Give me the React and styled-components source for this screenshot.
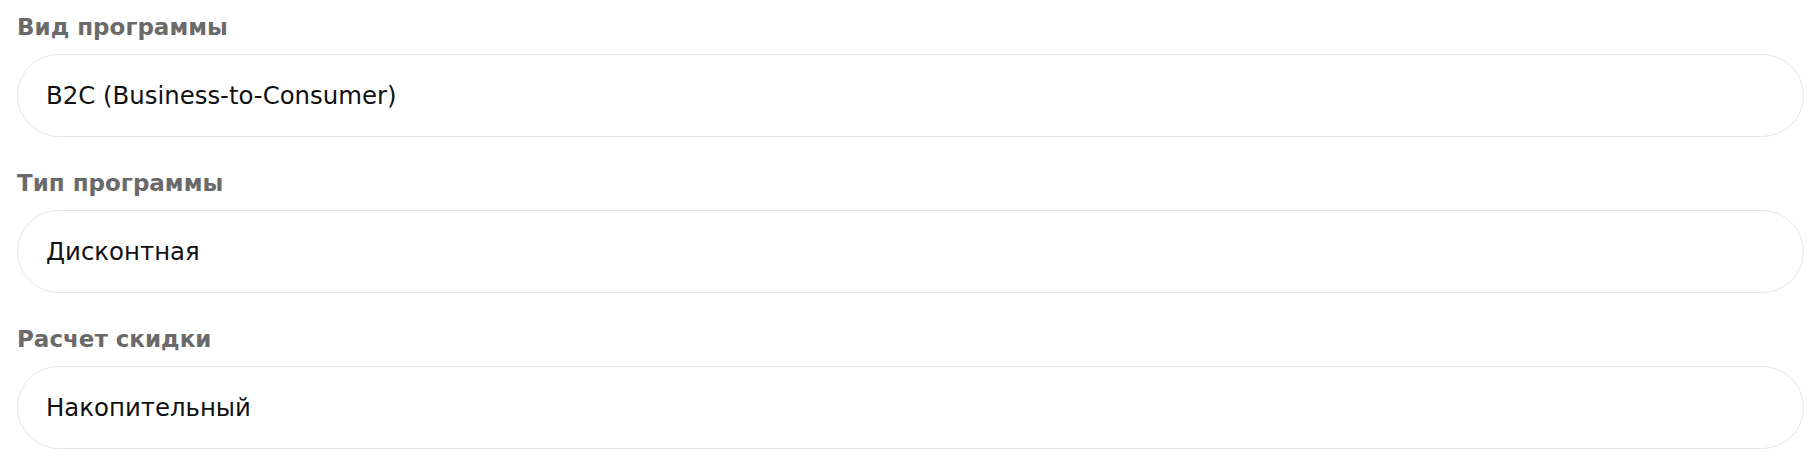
import React from 'react';
import { styled, createGlobalStyle } from 'styled-components';

const GlobalStyle = createGlobalStyle`
  html, body {
    margin: 0;
    padding: 0;
    background: #ffffff;
  }
  body {
    font-family: "DejaVu Sans", "Liberation Sans", sans-serif;
  }
`;

const fields = [
  { label: 'Вид программы', value: 'B2C (Business-to-Consumer)' },
  { label: 'Тип программы', value: 'Дисконтная' },
  { label: 'Расчет скидки', value: 'Накопительный' },
];

const ProgramSettings = () => {
  return (
    <Form>
      {fields.map((f) => (
        <Field key={f.label}>
          <FieldLabel>{f.label}</FieldLabel>
          <ValueBox>
            <ValueText>{f.value}</ValueText>
          </ValueBox>
        </Field>
      ))}
    </Form>
  );
};

const Form = styled.div`
  display: flex;
  flex-direction: column;
  gap: 32px;
  padding: 13px 12px 0 17px;
`;

const Field = styled.div`
  display: flex;
  flex-direction: column;
  gap: 13px;
`;

const FieldLabel = styled.div`
  font-size: 23px;
  line-height: 28px;
  font-weight: 700;
  color: #6a6a6a;
`;

const ValueBox = styled.div`
  height: 83px;
  box-sizing: border-box;
  display: flex;
  align-items: center;
  padding: 0 28px;
  background: #ffffff;
  border: 1px solid #e4e4ee;
  border-radius: 42px;
`;

const ValueText = styled.span`
  font-size: 24.4px;
  color: #111111;
`;

export default function App() {
  return (
    <>
      <GlobalStyle />
      <ProgramSettings />
    </>
  );
}
